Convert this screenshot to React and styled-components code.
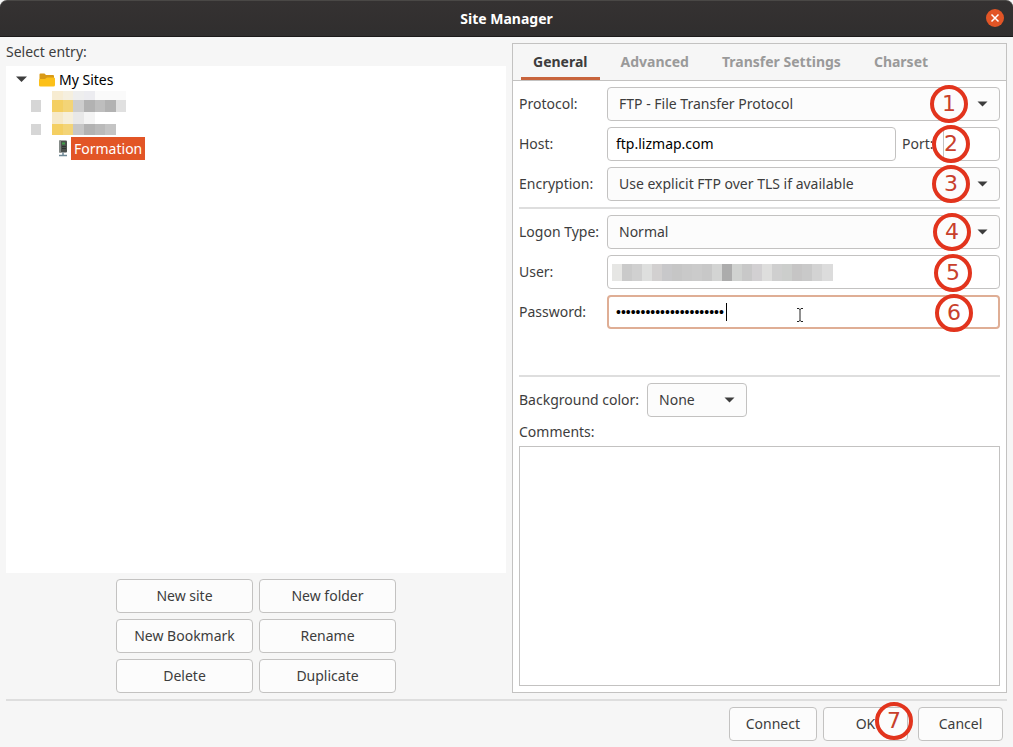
import { useState } from 'react'
import styled, { createGlobalStyle, css } from 'styled-components'

const GlobalStyle = createGlobalStyle`
  * { box-sizing: border-box; }
  body {
    margin: 0;
    background: #f6f6f6;
    color: #3d3d3d;
    font-family: "Noto Sans", sans-serif;
    font-size: 14px;
    line-height: 20px;
  }
  button, input, select, textarea { font: inherit; color: inherit; margin: 0; }
`

const Window = styled.div`
  min-height: 100vh;
  display: flex;
  flex-direction: column;
`

const TitleBar = styled.header`
  position: relative;
  height: 37px;
  display: flex;
  align-items: center;
  justify-content: center;
  background: linear-gradient(#353232, #302e2e);
  border-top: 1px solid #4a4846;
  border-bottom: 1px solid #1c1a1a;
  border-radius: 7px 7px 0 0;
  color: #fff;
`

const Title = styled.h1`
  margin: 0;
  font-size: 14px;
  font-weight: 700;
`

const CloseButton = styled.button`
  position: absolute;
  right: 9px;
  top: 8px;
  width: 18px;
  height: 18px;
  padding: 0;
  border: 0;
  border-radius: 50%;
  background: #e25526;
  svg { display: block; }
`

const Body = styled.main`
  flex: 1;
  display: grid;
  grid-template-columns: 500fr 495fr;
  gap: 6px;
  padding: 6px;
`

const Sites = styled.section`
  display: flex;
  flex-direction: column;
  min-width: 0;
`

const Heading = styled.h2`
  margin: 0 0 6px;
  font-size: 14px;
  font-weight: 400;
  line-height: 17px;
`

const Tree = styled.div`
  flex: 1;
  background: #fff;
  color: #000;
  padding: 2px 8px;
`

const TreeRow = styled.div`
  display: flex;
  align-items: center;
  height: 23px;
  padding-left: ${props => props.$indent || 0}px;
  svg { flex: none; }
`

const FolderIcon = styled.svg`
  margin-left: 12px;
`

const FolderName = styled.span`
  margin-left: 4px;
`

const SiteName = styled.span`
  margin-left: 3px;
  padding: 0 3px;
  line-height: 23px;
  background: #e25526;
  color: #fff;
`

const MaskedRows = styled.svg`
  display: block;
  margin-left: -4px;
`

const ButtonGrid = styled.div`
  display: grid;
  grid-template-columns: 137px 137px;
  justify-content: center;
  gap: 6px;
  margin-top: 6px;
`

const Button = styled.button`
  min-width: 85px;
  height: 34px;
  padding: 0 16px;
  border: 1px solid #c3c2c1;
  border-radius: 4px;
  background: #fcfcfc;
  white-space: nowrap;
`

const Notebook = styled.section`
  display: flex;
  flex-direction: column;
  min-width: 0;
  border: 1px solid #c3c2c1;
  background: #fff;
`

const Tabs = styled.div`
  display: flex;
  height: 37px;
  padding: 0 8px;
  gap: 9px;
  border-bottom: 1px solid #c3c2c1;
  background: #f6f6f6;
`

const Tab = styled.button`
  padding: 0 12px;
  border: 0;
  background: none;
  font-weight: 700;
  color: #9a9a9a;
  white-space: nowrap;
  ${props => props.$active && css`
    color: #3d3d3d;
    box-shadow: inset 0 -3px #c8643c;
  `}
`

const Panel = styled.form`
  flex: 1;
  display: flex;
  flex-direction: column;
  gap: 6px;
  padding: 6px;
`

const Row = styled.div`
  display: grid;
  grid-template-columns: 82px 1fr;
  align-items: center;
  gap: 6px;
  label { white-space: nowrap; }
`

const HostRow = styled(Row)`
  grid-template-columns: 82px 1fr 35px 57px;
`

const ColorRow = styled(Row)`
  grid-template-columns: max-content 100px;
  gap: 8px;
`

const Rule = styled.hr`
  width: 100%;
  height: 2px;
  margin: 0;
  border: 0;
  background: #dedede;
`

const Spacer = styled.div`
  height: 34px;
`

const Field = styled.div`
  position: relative;
  min-width: 0;
`

const Input = styled.input`
  display: block;
  width: 100%;
  height: 34px;
  padding: 0 8px 2px;
  border: 1px solid #c3c2c1;
  border-radius: 4px;
  background: #fff;
  color: #000;
  outline: none;
`

const PasswordInput = styled(Input)`
  padding: 0 7px;
  border: 2px solid #dfae95;
  font-family: "Liberation Sans", sans-serif;
`

const SelectBox = styled.select`
  display: block;
  width: 100%;
  height: 34px;
  padding: 0 32px 0 11px;
  appearance: none;
  border: 1px solid #c3c2c1;
  border-radius: 4px;
  background: #fcfcfc;
`

const Arrow = styled.svg`
  position: absolute;
  right: 12px;
  top: 14px;
  pointer-events: none;
`

const Comments = styled.textarea`
  flex: 1;
  width: 100%;
  padding: 6px;
  border: 1px solid #c3c2c1;
  background: #fff;
  resize: none;
  outline: none;
`

const CommentsLabel = styled.label`
  line-height: 17px;
`

const Badge = styled.span`
  position: absolute;
  z-index: 1;
  right: ${props => props.$right}px;
  top: ${props => props.$top || -2}px;
  width: 38px;
  height: 38px;
  border: 4px solid #e2341d;
  border-radius: 50%;
  color: #c8402c;
  font-family: "DejaVu Sans", sans-serif;
  font-size: 22px;
  line-height: 30px;
  text-align: center;
  pointer-events: none;
`

const Masked = styled.svg`
  position: absolute;
  left: 4px;
  top: 9px;
`

const Caret = styled.span`
  position: absolute;
  left: 119px;
  top: 8px;
  width: 1px;
  height: 18px;
  background: #000;
`

const Pointer = styled.svg`
  position: absolute;
  left: 189px;
  top: 12px;
`

const Footer = styled.footer`
  display: flex;
  flex-direction: column;
  gap: 6px;
  padding: 0 6px 6px;
`

const Actions = styled.div`
  display: flex;
  justify-content: flex-end;
  gap: 6px;
  padding-right: 4px;
`

const OkSlot = styled(Field)`
  margin-right: 4px;
`

const userTones = ['#e6e6e4', '#cacaca', '#d0d0d0', '#dedfde', '#d2d0d0', '#c8c8ca', '#c6c6c6', '#c9c9c9', '#cbcbcb', '#c8c8c8', '#d3d4d3', '#acacac', '#d0d2d0', '#c8c8c8', '#d2d0d2', '#dededd', '#cfcfcf', '#cccecc', '#c6c5c5', '#c9c9c9', '#d3d3d3', '#dcdcdc']

// x, y, width, height, fill
const treeBlocks = [
  [42, 0, 11, 9, '#f7ecd2'], [53, 0, 10, 9, '#f5efdf'], [63, 0, 11, 9, '#eeeeee'], [74, 0, 11, 9, '#ececf0'], [85, 0, 31, 9, '#fafafa'],
  [21, 9, 10, 12, '#d6d6d6'], [42, 9, 11, 12, '#f4cf62'], [53, 9, 10, 12, '#f3d477'], [63, 9, 11, 12, '#cdcdcd'], [74, 9, 11, 12, '#b2b2b2'], [85, 9, 10, 12, '#bebebe'], [95, 9, 11, 12, '#b2b2b2'], [106, 9, 10, 12, '#e0e0e0'],
  [42, 21, 11, 12, '#f6e9c8'], [53, 21, 10, 12, '#f6efdb'], [63, 21, 11, 12, '#e8e8e8'], [74, 21, 11, 12, '#f4f4f4'],
  [21, 33, 10, 11, '#d6d6d6'], [42, 33, 11, 11, '#f4cf62'], [53, 33, 10, 11, '#f3d477'], [63, 33, 11, 11, '#c6c6c6'], [74, 33, 11, 11, '#b2b2b2'], [85, 33, 10, 11, '#bababa'], [95, 33, 11, 11, '#c4c4c4'],
]

const tabs = ['General', 'Advanced', 'Transfer Settings', 'Charset']
const siteActions = ['New site', 'New folder', 'New Bookmark', 'Rename', 'Delete', 'Duplicate']

function Select({ id, options, badge, right }) {
  return (
    <Field>
      <SelectBox id={id}>
        {options.map(o => <option key={o}>{o}</option>)}
      </SelectBox>
      <Arrow width="11" height="6"><path d="M0.5 0.5h10l-5 5z" fill="#3d3d3d" /></Arrow>
      {badge && <Badge $right={right}>{badge}</Badge>}
    </Field>
  )
}

function SiteTree() {
  return (
    <Tree>
      <TreeRow $indent={2}>
        <svg width="11" height="7"><path d="M0 0.5h11l-5.5 5.5z" fill="#3d3d3d" /></svg>
        <FolderIcon width="16" height="14" viewBox="0 0 16 14">
          <path d="M0.5 1.5q0-1 1-1h4l1.5 1.500h7q1 0 1 1v9q0 1-1 1h-12.5q-1 0-1-1z" fill="#d99a16" />
          <path d="M0 7q0-1 1-1h5l2-1.5h6.5q1.500 0 1.500 1v6.500q0 1.500-1.500 1.500h-13q-1.500 0-1.500-1.500z" fill="#fcc019" />
        </FolderIcon>
        <FolderName>My Sites</FolderName>
      </TreeRow>
      <MaskedRows width="140" height="46" shapeRendering="crispEdges">
        {treeBlocks.map(([x, y, w, h, fill]) => (
          <rect key={x + '-' + y} x={x} y={y} width={w} height={h} fill={fill} />
        ))}
      </MaskedRows>
      <TreeRow $indent={43}>
        <svg width="11" height="17" viewBox="0 0 11 17">
          <rect x="2" y="0.5" width="8" height="12" rx="1" fill="#4a504d" />
          <rect x="2" y="0.5" width="2" height="12" fill="#858b88" />
          <path d="M5 6.500h4M5 8.500h4" stroke="#2d3330" />
          <path d="M5 3.500h3" stroke="#3fa049" strokeWidth="2" />
          <path d="M6 12.500v3M2 15.500h8" stroke="#6d8795" strokeWidth="1.5" />
        </svg>
        <SiteName>Formation</SiteName>
      </TreeRow>
    </Tree>
  )
}

function General() {
  let [host, setHost] = useState('ftp.lizmap.com')
  let [password, setPassword] = useState('lizmapformationlizmap1')

  return (
    <Panel onSubmit={e => e.preventDefault()}>
      <Row>
        <label htmlFor="protocol">Protocol:</label>
        <Select id="protocol" options={['FTP - File Transfer Protocol']} badge="1" right={32} />
      </Row>
      <HostRow>
        <label htmlFor="host">Host:</label>
        <Input id="host" value={host} onChange={e => setHost(e.target.value)} />
        <label htmlFor="port">Port:</label>
        <Field>
          <Input id="port" />
          <Badge $right={30}>2</Badge>
        </Field>
      </HostRow>
      <Row>
        <label htmlFor="encryption">Encryption:</label>
        <Select id="encryption" options={['Use explicit FTP over TLS if available']} badge="3" right={30} />
      </Row>
      <Rule />
      <Row>
        <label htmlFor="logon">Logon Type:</label>
        <Select id="logon" options={['Normal']} badge="4" right={29} />
      </Row>
      <Row>
        <label htmlFor="user">User:</label>
        <Field>
          <Input id="user" />
          <Masked width="222" height="17" shapeRendering="crispEdges">
            {userTones.map((fill, i) => <rect key={i} x={i * 10 + 1} width="11" height="17" fill={fill} />)}
          </Masked>
          <Badge $right={28} $top={-1}>5</Badge>
        </Field>
      </Row>
      <Row>
        <label htmlFor="password">Password:</label>
        <Field>
          <PasswordInput id="password" type="password" value={password} onChange={e => setPassword(e.target.value)} />
          <Caret />
          <Pointer width="8" height="16" viewBox="0 0 8 16">
            <path d="M1 1.5h2l1 1 1-1h2M4 2v12M1 14.5h2l1-1 1 1h2" fill="none" stroke="#222" />
          </Pointer>
          <Badge $right={27} $top={-1}>6</Badge>
        </Field>
      </Row>
      <Spacer />
      <Rule />
      <ColorRow>
        <label htmlFor="color">Background color:</label>
        <Select id="color" options={['None']} />
      </ColorRow>
      <CommentsLabel htmlFor="comments">Comments:</CommentsLabel>
      <Comments id="comments" />
    </Panel>
  )
}

function App() {
  let [tab, setTab] = useState('General')

  return (
    <Window>
      <GlobalStyle />
      <TitleBar>
        <Title>Site Manager</Title>
        <CloseButton aria-label="Close">
          <svg width="18" height="18"><path d="M5.5 5.5l7 7M12.5 5.5l-7 7" stroke="#fff" strokeWidth="1.5" /></svg>
        </CloseButton>
      </TitleBar>
      <Body>
        <Sites>
          <Heading>Select entry:</Heading>
          <SiteTree />
          <ButtonGrid>
            {siteActions.map(name => <Button key={name}>{name}</Button>)}
          </ButtonGrid>
        </Sites>
        <Notebook>
          <Tabs role="tablist">
            {tabs.map(name => (
              <Tab key={name} role="tab" aria-selected={tab == name} $active={tab == name} onClick={() => setTab(name)}>{name}</Tab>
            ))}
          </Tabs>
          <General />
        </Notebook>
      </Body>
      <Footer>
        <Rule />
        <Actions>
          <Button>Connect</Button>
          <OkSlot>
            <Button>OK</Button>
            <Badge $right={-5} $top={-5}>7</Badge>
          </OkSlot>
          <Button>Cancel</Button>
        </Actions>
      </Footer>
    </Window>
  )
}

export default App
